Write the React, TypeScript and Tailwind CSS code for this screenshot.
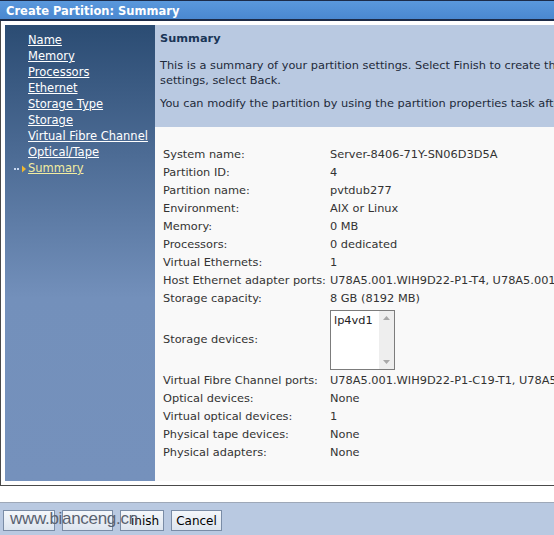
import React from 'react';

const steps = [
  'Name', 'Memory', 'Processors', 'Ethernet', 'Storage Type',
  'Storage', 'Virtual Fibre Channel', 'Optical/Tape', 'Summary',
];

const before = [
  ['System name:', 'Server-8406-71Y-SN06D3D5A'],
  ['Partition ID:', '4'],
  ['Partition name:', 'pvtdub277'],
  ['Environment:', 'AIX or Linux'],
  ['Memory:', '0 MB'],
  ['Processors:', '0 dedicated'],
  ['Virtual Ethernets:', '1'],
  ['Host Ethernet adapter ports:', 'U78A5.001.WIH9D22-P1-T4, U78A5.001.WIH9D22-P1-T3'],
  ['Storage capacity:', '8 GB (8192 MB)'],
];

const after = [
  ['Virtual Fibre Channel ports:', 'U78A5.001.WIH9D22-P1-C19-T1, U78A5.001.WIH9D22-P1-C19-T2'],
  ['Optical devices:', 'None'],
  ['Virtual optical devices:', '1'],
  ['Physical tape devices:', 'None'],
  ['Physical adapters:', 'None'],
];

function Row({ label, value }: { label: string; value: string }) {
  return (
    <div className="flex h-[18px] items-center whitespace-nowrap">
      <span className="w-[167px] shrink-0">{label}</span>
      <span>{value}</span>
    </div>
  );
}

function Arrow() {
  return (
    <svg width="13" height="8" viewBox="0 0 13 8" className="mr-[1px]">
      <rect x="0" y="3" width="2" height="2" fill="#c8d8f0" />
      <rect x="3" y="3" width="2" height="2" fill="#c8d8f0" />
      <path d="M8 0.5 L12 4 L8 7.5 Z" fill="#f0b830" />
    </svg>
  );
}

export default function App() {
  return (
    <div className="relative w-[554px] h-[535px] bg-white overflow-hidden font-['DejaVu_Sans',Verdana,sans-serif] text-[11.35px] text-[#333]">
      {/* Title bar */}
      <div className="h-[21px] border-t border-b-2 border-[#1c2b48] bg-gradient-to-b from-[#5a98dc] to-[#4a88d0] pl-[6px] pt-[3px] flex items-center">
        <span className="text-white font-bold text-[11.5px] whitespace-nowrap">Create Partition: Summary</span>
      </div>

      {/* Panel */}
      <div className="h-[465px] border-l border-b border-[#4a4a4a] pl-[4px] pt-[4px] pb-[4px] flex">
        {/* Nav */}
        <nav className="w-[150px] shrink-0 bg-gradient-to-b from-[#2b4c73] via-[#7390bb] via-60% to-[#7591bc] pt-[8px]">
          {steps.map((s) => (
            <div key={s} className="h-[16px] flex items-center pl-[9px]">
              <span className="w-[14px] flex items-center">
                {s === 'Summary' && <Arrow />}
              </span>
              <a
                href="#"
                className={`underline whitespace-nowrap text-[11.5px] ${
                  s === 'Summary' ? 'text-[#f2eca0]' : 'text-white'
                }`}
              >
                {s}
              </a>
            </div>
          ))}
        </nav>

        {/* Content */}
        <div className="flex-1 min-w-0 flex flex-col">
          <div className="bg-[#b9c9e1] pl-[5px] pt-[5px] pb-[16px] text-[#1e2a3a] leading-[15px] whitespace-nowrap">
            <h2 className="font-bold text-[#1a3556] leading-[16px] mb-[12px]">Summary</h2>
            <p className="mb-[8px]">
              This is a summary of your partition settings. Select Finish to create the partition. To change any
              <br />
              settings, select Back.
            </p>
            <p>You can modify the partition by using the partition properties task after the partition is created.</p>
          </div>
          <div className="flex-1 bg-[#f9f9f9] pl-[8px] pt-[19px]">
            {before.map(([l, v]) => (
              <Row key={l} label={l} value={v} />
            ))}
            <div className="flex items-center py-[2px]">
              <span className="w-[167px] shrink-0">Storage devices:</span>
              <div className="w-[65px] h-[60px] border border-[#7c7c7c] bg-white flex">
                <div className="flex-1 pl-[3px] pt-[1px] text-[#222]">lp4vd1</div>
                <div className="w-[15px] bg-[#eeeeee] flex flex-col justify-between items-center py-[5px]">
                  <svg width="7" height="4" viewBox="0 0 7 4"><path d="M0 4 L3.5 0 L7 4 Z" fill="#a8a8a8" /></svg>
                  <svg width="7" height="4" viewBox="0 0 7 4"><path d="M0 0 L3.5 4 L7 0 Z" fill="#a8a8a8" /></svg>
                </div>
              </div>
            </div>
            {after.map(([l, v]) => (
              <Row key={l} label={l} value={v} />
            ))}
          </div>
        </div>
      </div>

      {/* Footer */}
      <div className="mt-[16px] h-[33px] border-t border-[#9ea8b8] bg-[#b9c9e1] pl-[3px] pt-[7px] flex gap-[7px] items-start">
        <button className="w-[52px] h-[21px] border border-[#7a8ca6] bg-gradient-to-b from-[#f4f7fb] to-[#dde5ef] text-[12px] text-black" />
        <button className="w-[51px] h-[21px] border border-[#7a8ca6] bg-gradient-to-b from-[#f4f7fb] to-[#dde5ef] text-[12px] text-black" />
        <button className="w-[44px] h-[21px] border border-[#7a8ca6] bg-gradient-to-b from-[#f4f7fb] to-[#dde5ef] text-[12px] text-black pl-[10px] text-left">
          inish
        </button>
        <button className="w-[51px] h-[21px] border border-[#7a8ca6] bg-gradient-to-b from-[#f4f7fb] to-[#dde5ef] text-[12px] text-black">
          Cancel
        </button>
      </div>

      {/* Watermark */}
      <div className="absolute left-[10px] top-[509px] font-['Liberation_Sans',Arial,sans-serif] text-[17px] leading-[20px] text-[#5a6270] tracking-[-0.3px] whitespace-nowrap">
        www.bianceng.cn
      </div>
    </div>
  );
}
